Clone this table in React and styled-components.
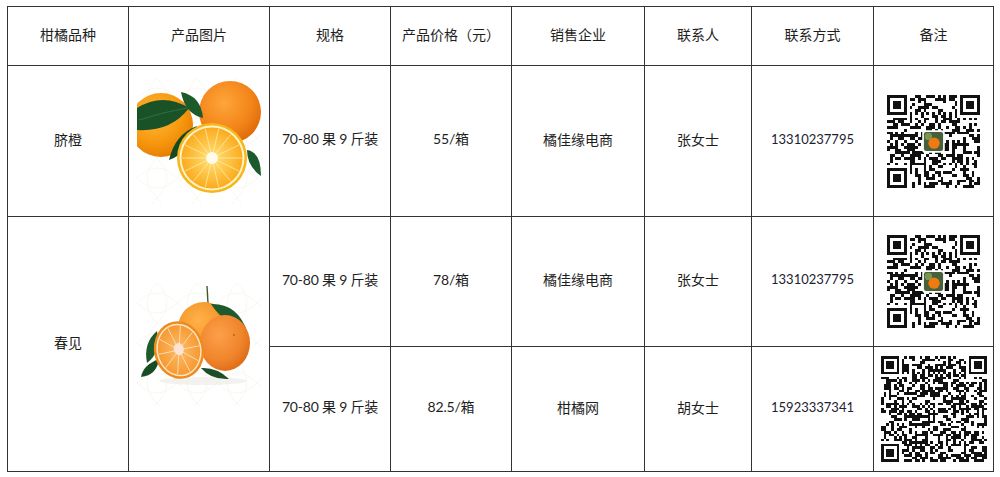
import React from 'react'
import styled, { createGlobalStyle } from 'styled-components'

const GlobalStyle = createGlobalStyle`
  body {
    margin: 0;
    background: #fff;
    font-family: "Noto Sans CJK SC", "Noto Sans", sans-serif;
    color: #1e1e1e;
  }
`

const rows = [
  { variety: '脐橙', pic: 'navel', span: 1, spec: '70-80 果 9 斤装', price: '55/箱', shop: '橘佳缘电商', person: '张女士', phone: '13310237795', qr: 'a', h: 151 },
  { variety: '春见', pic: 'chunjian', span: 2, spec: '70-80 果 9 斤装', price: '78/箱', shop: '橘佳缘电商', person: '张女士', phone: '13310237795', qr: 'a', h: 130 },
  { spec: '70-80 果 9 斤装', price: '82.5/箱', shop: '柑橘网', person: '胡女士', phone: '15923337341', qr: 'b', h: 125 },
]

const heads = ['柑橘品种', '产品图片', '规格', '产品价格（元）', '销售企业', '联系人', '联系方式', '备注']
const widths = [121, 141, 121, 121, 133, 107, 122, 120]

function mulberry32(a) {
  return function () {
    a |= 0; a = (a + 0x6d2b79f5) | 0
    let t = Math.imul(a ^ (a >>> 15), 1 | a)
    t = (t + Math.imul(t ^ (t >>> 7), 61 | t)) ^ t
    return ((t ^ (t >>> 14)) >>> 0) / 4294967296
  }
}

function buildQR(n, seed) {
  const rnd = mulberry32(seed)
  const m = Array.from({ length: n }, () => Array.from({ length: n }, () => rnd() < 0.5))
  const finder = (r0, c0) => {
    for (let r = -1; r <= 7; r++) {
      for (let c = -1; c <= 7; c++) {
        const y = r0 + r, x = c0 + c
        if (y < 0 || x < 0 || y >= n || x >= n) continue
        const inside = r >= 0 && r <= 6 && c >= 0 && c <= 6
        m[y][x] = inside && (r === 0 || r === 6 || c === 0 || c === 6 || (r >= 2 && r <= 4 && c >= 2 && c <= 4))
      }
    }
  }
  finder(0, 0); finder(0, n - 7); finder(n - 7, 0)
  for (let i = 8; i < n - 8; i++) { m[6][i] = i % 2 === 0; m[i][6] = i % 2 === 0 }
  let d = ''
  m.forEach((row, y) => row.forEach((on, x) => { if (on) d += `M${x} ${y}h1v1h-1z` }))
  return d
}

const qrA = buildQR(33, 7)
const qrB = buildQR(41, 23)

const QR = ({ kind }) => {
  const n = kind === 'a' ? 33 : 41
  const size = kind === 'a' ? 93 : 106
  const c = n / 2
  return (
    <svg width={size} height={size} viewBox={`0 0 ${n} ${n}`} shapeRendering="crispEdges">
      <path d={kind === 'a' ? qrA : qrB} fill="#111" />
      {kind === 'a' && (
        <g shapeRendering="auto">
          <rect x={c - 4} y={c - 4} width="8" height="8" rx="1" fill="#fff" />
          <rect x={c - 3.4} y={c - 3.4} width="6.8" height="6.8" rx="0.8" fill="#45603a" />
          <circle cx={c - 1.8} cy={c - 1.8} r="1.3" fill="#7a9650" />
          <circle cx={c + 0.2} cy={c + 0.6} r="2" fill="#f07a12" />
        </g>
      )}
    </svg>
  )
}

const Lattice = ({ id }) => (
  <>
    <defs>
      <pattern id={id} width="40" height="40" patternUnits="userSpaceOnUse">
        <path d="M0 20 Q20 0 40 20 Q20 40 0 20 M20 0 Q0 20 20 40 Q40 20 20 0" fill="none" stroke="#f6f4ea" strokeWidth="0.7" />
      </pattern>
    </defs>
    <rect width="100%" height="100%" fill={`url(#${id})`} />
  </>
)

const Navel = () => {
  const segs = Array.from({ length: 14 }, (_, i) => (i * Math.PI * 2) / 14)
  return (
    <svg width="124" height="126" viewBox="0 0 124 126">
      <defs>
        <radialGradient id="nvA" cx="40%" cy="35%" r="70%">
          <stop offset="0" stopColor="#ffb83e" />
          <stop offset="0.6" stopColor="#f7990f" />
          <stop offset="1" stopColor="#e67a00" />
        </radialGradient>
        <radialGradient id="nvB" cx="40%" cy="35%" r="70%">
          <stop offset="0" stopColor="#ffa53a" />
          <stop offset="0.65" stopColor="#f28419" />
          <stop offset="1" stopColor="#dd6808" />
        </radialGradient>
        <radialGradient id="nvF" cx="50%" cy="50%" r="50%">
          <stop offset="0" stopColor="#fffbe6" />
          <stop offset="0.18" stopColor="#ffd968" />
          <stop offset="1" stopColor="#fbab1e" />
        </radialGradient>
      </defs>
      <Lattice id="latA" />
      <circle cx="24" cy="47" r="32" fill="url(#nvA)" />
      <circle cx="93" cy="34" r="31" fill="url(#nvB)" />
      <path d="M0 30 Q26 14 52 30 Q34 54 0 52 Z" fill="#1a5227" />
      <path d="M2 42 Q26 34 50 30" stroke="#3b7442" strokeWidth="0.8" fill="none" />
      <path d="M44 14 Q64 18 66 40 Q48 36 44 14 Z" fill="#1d5a2b" />
      <path d="M60 48 Q38 56 32 82 Q54 74 60 48 Z" fill="#15491f" />
      <path d="M110 72 Q124 74 124 98 Q110 88 110 72 Z" fill="#1d5a2b" />
      <circle cx="75" cy="80" r="35" fill="#f7b61e" />
      <circle cx="75" cy="80" r="32.5" fill="#fff3c4" />
      <circle cx="75" cy="80" r="30.5" fill="url(#nvF)" />
      {segs.map((a, i) => (
        <line key={i} x1="75" y1="80" x2={75 + Math.cos(a) * 30} y2={80 + Math.sin(a) * 30} stroke="#fff0bd" strokeWidth="0.9" opacity="0.8" />
      ))}
      <circle cx="75" cy="80" r="6" fill="#fffbea" />
    </svg>
  )
}

const Chunjian = () => {
  const segs = Array.from({ length: 10 }, (_, i) => (i * Math.PI * 2) / 10)
  return (
    <svg width="125" height="123" viewBox="0 0 125 123">
      <defs>
        <radialGradient id="cjA" cx="40%" cy="35%" r="70%">
          <stop offset="0" stopColor="#ffb24a" />
          <stop offset="0.65" stopColor="#f4952a" />
          <stop offset="1" stopColor="#e27a14" />
        </radialGradient>
        <radialGradient id="cjB" cx="38%" cy="35%" r="70%">
          <stop offset="0" stopColor="#fca04a" />
          <stop offset="0.65" stopColor="#f0852c" />
          <stop offset="1" stopColor="#dc6c16" />
        </radialGradient>
        <radialGradient id="cjF" cx="50%" cy="50%" r="50%">
          <stop offset="0" stopColor="#fde0cc" />
          <stop offset="0.25" stopColor="#fbb45c" />
          <stop offset="1" stopColor="#f79a32" />
        </radialGradient>
      </defs>
      <Lattice id="latB" />
      <ellipse cx="66" cy="98" rx="44" ry="4" fill="#ece9e4" opacity="0.6" />
      <line x1="70" y1="3" x2="71" y2="20" stroke="#3e5b2a" strokeWidth="1.4" />
      <circle cx="67" cy="45" r="26" fill="url(#cjA)" />
      <path d="M74 21 Q100 20 110 48 Q86 40 74 21 Z" fill="#1f5a2c" />
      <ellipse cx="88" cy="60" rx="25" ry="28" fill="url(#cjB)" />
      <circle cx="97" cy="52" r="0.9" fill="#b55a10" />
      <path d="M64 85 Q80 84 92 96 Q74 97 64 85 Z" fill="#1d4f27" />
      <path d="M20 48 Q6 60 10 80 Q24 70 20 48 Z" fill="#1f5a2c" />
      <path d="M22 76 Q6 82 4 94 Q20 92 22 76 Z" fill="#174d25" />
      <g transform="rotate(-12 42 67)">
        <ellipse cx="42" cy="67" rx="25" ry="29" fill="#ef8a1e" />
        <ellipse cx="42" cy="67" rx="22.5" ry="26.5" fill="#fde7c2" />
        <ellipse cx="42" cy="67" rx="21" ry="25" fill="url(#cjF)" />
        {segs.map((a, i) => (
          <line key={i} x1="42" y1="67" x2={42 + Math.cos(a) * 20.5} y2={67 + Math.sin(a) * 24.5} stroke="#fde2bf" strokeWidth="0.9" opacity="0.9" />
        ))}
        <ellipse cx="42" cy="66" rx="5" ry="6" fill="#fce3d4" />
      </g>
    </svg>
  )
}

const Table = styled.table`
  margin: 6px 0 0 7px;
  border-collapse: collapse;
  table-layout: fixed;
  width: 986px;
  font-size: 14px;
  border: 1px solid #2a2a2a;
`

const Row = styled.tr`
  height: ${p => p.$h}px;
`

const Cell = styled.td`
  border: 1px solid #333;
  border-left-color: ${p => (p.$soft ? '#8c8c8c' : '#333')};
  text-align: center;
  vertical-align: middle;
  padding: 0 0 ${p => (p.$flush ? 0 : 4)}px;
  line-height: 1.3;
  white-space: nowrap;
  font-family: ${p => (p.$num ? 'Lato, "Noto Sans CJK SC", sans-serif' : '"Noto Sans CJK SC", "Noto Sans", sans-serif')};
  font-size: ${p => (p.$num ? '13px' : '14px')};
  color: ${p => (p.$num ? '#1c2230' : '#1e1e1e')};
`

const Head = styled(Cell).attrs({ as: 'th' })`
  font-weight: normal;
`

const Figure = styled.div`
  display: flex;
  justify-content: center;
  align-items: center;
  svg { display: block; }
`

const Spec = styled.span`
  font-family: Lato, "Noto Sans CJK SC", sans-serif;
  font-size: 14px;
  letter-spacing: -0.2px;
`

export default function App() {
  return (
    <>
      <GlobalStyle />
      <Table>
        <colgroup>
          {widths.map((w, i) => <col key={i} style={{ width: w }} />)}
        </colgroup>
        <thead>
          <Row $h={59}>
            {heads.map((h, i) => <Head key={h} $soft={i === 2 || i === 3}>{h}</Head>)}
          </Row>
        </thead>
        <tbody>
          {rows.map((r, i) => (
            <Row key={i} $h={r.h}>
              {r.variety && <Cell rowSpan={r.span}>{r.variety}</Cell>}
              {r.pic && (
                <Cell rowSpan={r.span} $flush>
                  <Figure>{r.pic === 'navel' ? <Navel /> : <Chunjian />}</Figure>
                </Cell>
              )}
              <Cell $soft><Spec>{r.spec}</Spec></Cell>
              <Cell $soft><Spec>{r.price}</Spec></Cell>
              <Cell>{r.shop}</Cell>
              <Cell>{r.person}</Cell>
              <Cell $num>{r.phone}</Cell>
              <Cell $flush><Figure><QR kind={r.qr} /></Figure></Cell>
            </Row>
          ))}
        </tbody>
      </Table>
    </>
  )
}
